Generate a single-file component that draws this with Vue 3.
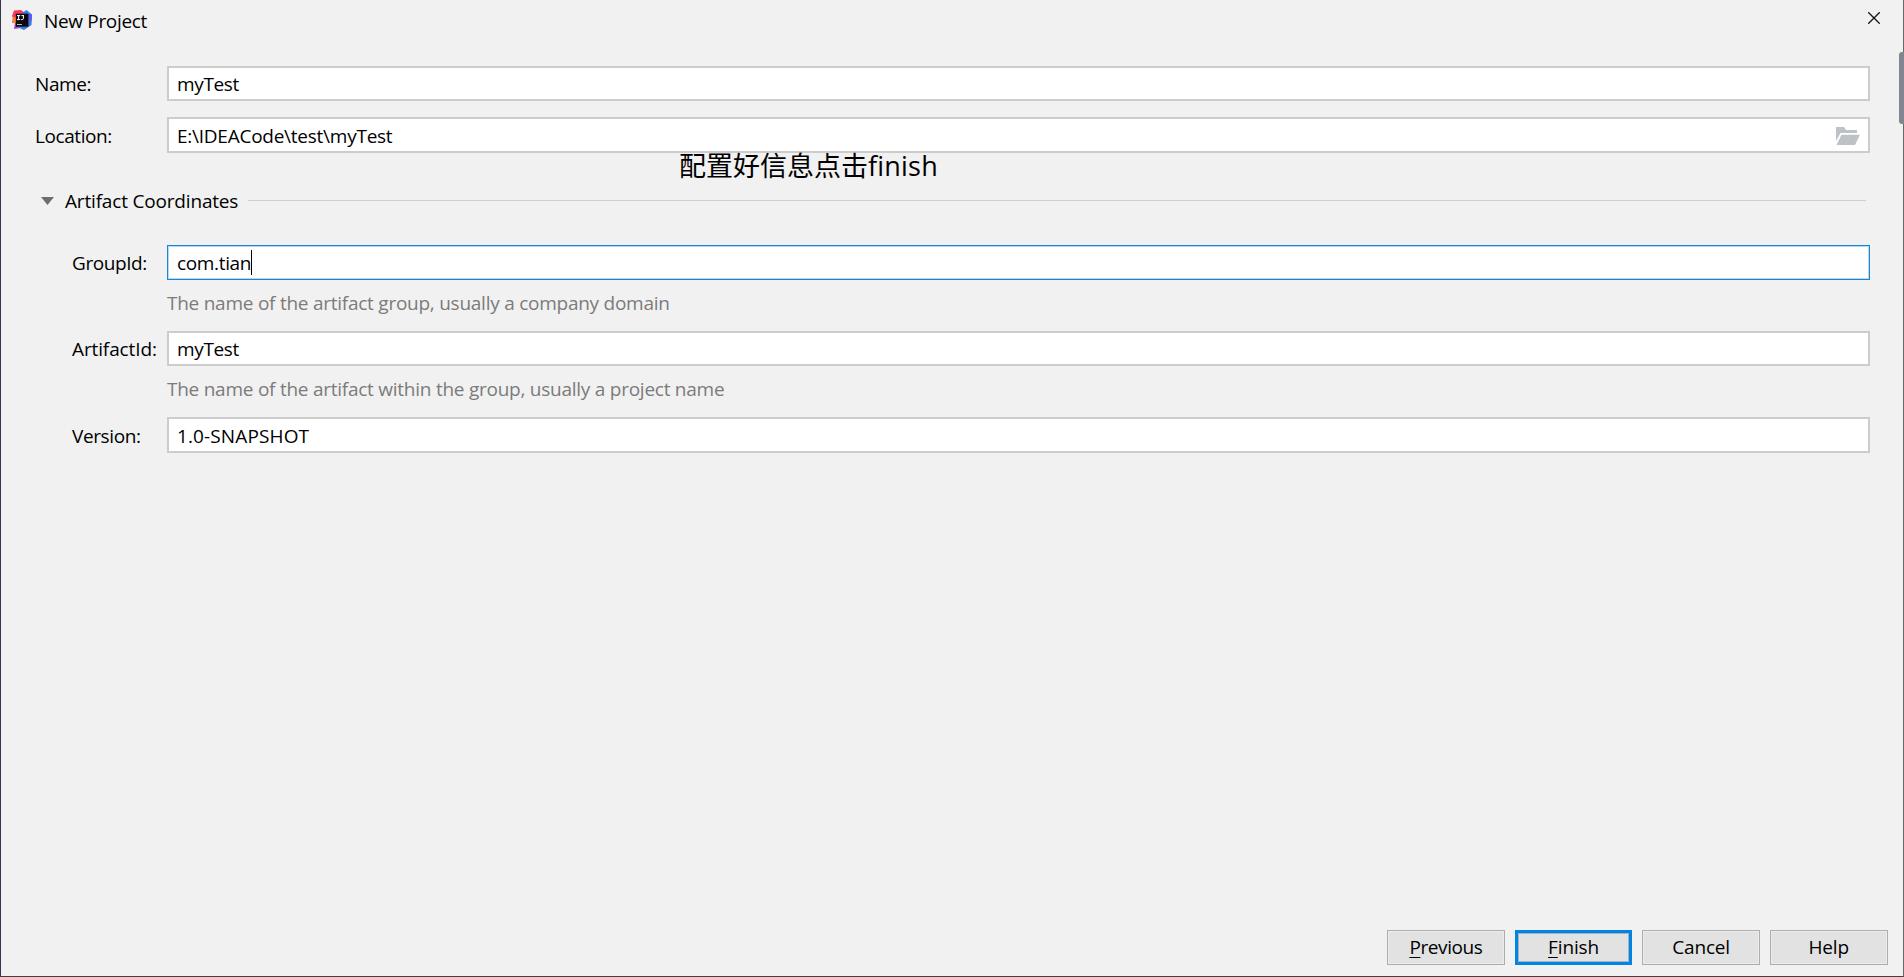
<template>
  <div class="window">
    <header class="titlebar">
      <svg class="logo" viewBox="0 0 20 20">
        <path d="M2 0.5 L9 0 L13 3 L8 10 L0 13 L1 8 L0 6 Z" fill="#f8385f" />
        <path d="M0.5 8 L5 6 L7 14 L1 13 Z" fill="#f98a2c" />
        <path d="M3 13 L10 13 L8 18 L2 19 Z" fill="#9a3fd0" />
        <path d="M10 3 L14.5 0 L20 4.5 L19.5 15 L12 20 L5 17 L8 12 Z" fill="#3f78e6" />
        <path d="M14 4 L20 4.5 L19.6 11 L16 9 Z" fill="#5a5ce8" />
        <rect x="3.8" y="3.7" width="12.6" height="13" fill="#0b0b0f" />
        <path
          d="M5 5.6 H8.2 M6.6 5.6 V9.6 M5 9.6 H8.2 M9.4 5.6 H12 M11.4 5.6 V8.4 Q11.4 9.6 10.2 9.6 H9.2"
          fill="none"
          stroke="#fff"
          stroke-width="1"
        />
        <rect x="5" y="14" width="5" height="1" fill="#bbb" />
      </svg>
      <span class="title">New Project</span>
      <svg class="close" viewBox="0 0 12 12">
        <path d="M0.3 0.3 L11.7 11.7 M11.7 0.3 L0.3 11.7" stroke="#111" stroke-width="1.3" />
      </svg>
    </header>

    <main class="form">
      <div class="row">
        <label class="name">Name:</label>
        <div class="field"><span class="mytest">{{ name }}</span></div>
      </div>
      <div class="row tall location-row">
        <label class="location">Location:</label>
        <div class="field">
          <span class="path">{{ location }}</span>
          <svg class="folder" viewBox="0 0 24 18">
            <path d="M0 0 H8 L10 3 H21 V6 H4.5 L0 14 Z" fill="#bcc2c6" />
            <path d="M5.5 7.7 H24 L19 18 H0.5 Z" fill="#bcc2c6" />
          </svg>
        </div>
      </div>

      <div class="section">
        <svg class="arrow" viewBox="0 0 13 8"><path d="M0 0 H13 L6.5 8 Z" fill="#6e6e6e" /></svg>
        <span class="section-title">Artifact Coordinates</span>
        <span class="line"></span>
      </div>

      <template v-for="item in coordinates" :key="item.id">
        <div class="row sub" :class="{ tall: item.id === 'version' }">
          <label :class="item.id">{{ item.label }}</label>
          <div class="field" :class="{ focused: item.focused }">
            <span :class="item.valueClass">{{ item.value }}</span>
            <i v-if="item.focused" class="caret"></i>
          </div>
        </div>
        <p v-if="item.hint" class="hint">{{ item.hint }}</p>
      </template>
    </main>

    <footer class="buttons">
      <button class="previous"><u>P</u>revious</button>
      <button class="finish"><u>F</u>inish</button>
      <button class="cancel">Cancel</button>
      <button class="help">Help</button>
    </footer>

    <div class="note">配置好信息点击<span>finish</span></div>
    <div class="scroll-thumb"></div>
  </div>
</template>

<script setup>
import { ref } from "vue";

const name = ref("myTest");
const location = ref("E:\\IDEACode\\test\\myTest");

const coordinates = ref([
  {
    id: "group",
    label: "GroupId:",
    value: "com.tian",
    valueClass: "comtian",
    hint: "The name of the artifact group, usually a company domain",
    focused: true,
  },
  {
    id: "artifact",
    label: "ArtifactId:",
    value: "myTest",
    valueClass: "mytest",
    hint: "The name of the artifact within the group, usually a project name",
  },
  {
    id: "version",
    label: "Version:",
    value: "1.0-SNAPSHOT",
    valueClass: "snapshot",
  },
]);
</script>

<style>
body {
  margin: 0;
  overflow: hidden;
}
</style>

<style scoped>
.window {
  position: relative;
  display: flex;
  flex-direction: column;
  box-sizing: border-box;
  width: 1904px;
  height: 977px;
  border: 1px solid #404042;
  border-top: 0;
  border-left-color: #34364a;
  border-right-color: #66676a;
  background: #f1f1f1;
  color: #000;
  font-family: "Open Sans", "Noto Sans CJK SC", sans-serif;
  font-size: 19px;
  line-height: 26px;
  letter-spacing: -0.25px;
  white-space: nowrap;
}

.titlebar {
  display: flex;
  align-items: flex-start;
  height: 66px;
  padding: 0 23px 0 11px;
}

.logo {
  width: 20px;
  height: 20px;
  margin-top: 10px;
}

.title {
  flex: 1;
  margin: 8px 0 0 12px;
  letter-spacing: -0.33px;
}

.close {
  width: 12px;
  height: 12px;
  margin-top: 12px;
}

.form {
  flex: 1;
  padding: 0 33px 0 34px;
}

.row {
  display: flex;
  align-items: center;
  height: 35px;
}

.tall {
  height: 36px;
}

.location-row {
  margin-top: 16px;
}

.row label {
  width: 132px;
}

.row .name,
.row .version {
  letter-spacing: -0.38px;
}

.row .location,
.row .group {
  letter-spacing: -0.43px;
}

.row .artifact {
  letter-spacing: -0.12px;
}

.sub {
  padding-left: 37px;
}

.sub label {
  width: 95px;
}

.field {
  flex: 1;
  display: flex;
  align-items: center;
  align-self: stretch;
  box-sizing: border-box;
  padding: 0 8px;
  border: 2px solid #cccccc;
  background: #fff;
}

.focused {
  padding: 0 9px;
  border: 1px solid #1a85d0;
  box-shadow: inset 0 0 0 1px #b5d9f2;
}

.mytest,
.comtian {
  letter-spacing: -0.35px;
}

.snapshot {
  letter-spacing: 0.12px;
}

.tall label,
.tall span {
  padding-top: 1px;
}

.caret {
  width: 1px;
  height: 25px;
  background: #000;
}

.folder {
  width: 24px;
  height: 18px;
  margin-left: auto;
  margin-top: 1px;
}

.section {
  display: flex;
  align-items: center;
  height: 26px;
  margin: 35px 4px 31px 6px;
}

.section-title {
  letter-spacing: -0.18px;
}

.arrow {
  width: 13px;
  height: 8px;
  margin-right: 11px;
}

.line {
  flex: 1;
  height: 1px;
  margin-left: 10px;
  margin-top: -1px;
  background: #cfcfcf;
}

.hint {
  height: 26px;
  margin: 10px 0 15px 132px;
  color: #7b7b7b;
}

.buttons {
  display: flex;
  justify-content: flex-end;
  gap: 10px;
  padding: 0 15.5px 11px 0;
}

.buttons button {
  box-sizing: border-box;
  width: 117.6px;
  height: 35px;
  padding: 0 0 2px;
  border: 1px solid #adadad;
  background: #e2e2e2;
  box-shadow: inset 0 0 0 1px #ececec;
  color: #000;
  font: inherit;
  letter-spacing: -0.15px;
}

.buttons .previous {
  letter-spacing: -0.4px;
}

.buttons .finish {
  border: 3px solid #0484e2;
  box-shadow: inset 0 0 0 1px #9fb4c6;
}

u {
  text-decoration-thickness: 1px;
  text-underline-offset: 3px;
}

.note {
  position: absolute;
  left: 678px;
  top: 148px;
  font-size: 27px;
  line-height: 36px;
  letter-spacing: 0;
}

.note span {
  letter-spacing: 0.2px;
}

.scroll-thumb {
  position: absolute;
  top: 52px;
  right: -1px;
  width: 5px;
  height: 72px;
  border-radius: 3px 0 0 3px;
  background: #808590;
}
</style>
